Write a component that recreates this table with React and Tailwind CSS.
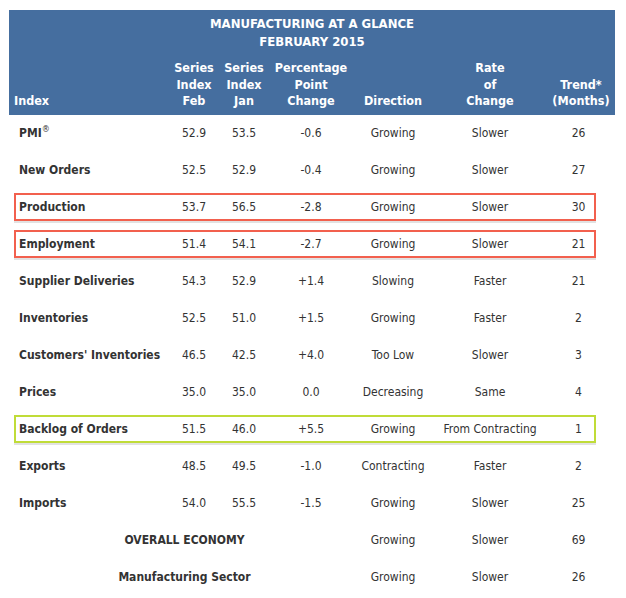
import React from 'react'

const rows = [
    { name: 'PMI', sup: true, feb: '52.9', jan: '53.5', pct: '-0.6', dir: 'Growing', rate: 'Slower', trend: '26' },
    { name: 'New Orders', feb: '52.5', jan: '52.9', pct: '-0.4', dir: 'Growing', rate: 'Slower', trend: '27' },
    { name: 'Production', feb: '53.7', jan: '56.5', pct: '-2.8', dir: 'Growing', rate: 'Slower', trend: '30', box: 'red' },
    { name: 'Employment', feb: '51.4', jan: '54.1', pct: '-2.7', dir: 'Growing', rate: 'Slower', trend: '21', box: 'red' },
    { name: 'Supplier Deliveries', feb: '54.3', jan: '52.9', pct: '+1.4', dir: 'Slowing', rate: 'Faster', trend: '21' },
    { name: 'Inventories', feb: '52.5', jan: '51.0', pct: '+1.5', dir: 'Growing', rate: 'Faster', trend: '2' },
    { name: "Customers' Inventories", feb: '46.5', jan: '42.5', pct: '+4.0', dir: 'Too Low', rate: 'Slower', trend: '3' },
    { name: 'Prices', feb: '35.0', jan: '35.0', pct: '0.0', dir: 'Decreasing', rate: 'Same', trend: '4' },
    { name: 'Backlog of Orders', feb: '51.5', jan: '46.0', pct: '+5.5', dir: 'Growing', rate: 'From Contracting', trend: '1', box: 'green' },
    { name: 'Exports', feb: '48.5', jan: '49.5', pct: '-1.0', dir: 'Contracting', rate: 'Faster', trend: '2' },
    { name: 'Imports', feb: '54.0', jan: '55.5', pct: '-1.5', dir: 'Growing', rate: 'Slower', trend: '25' },
]

const summary = [
    { name: 'OVERALL ECONOMY', dir: 'Growing', rate: 'Slower', trend: '69' },
    { name: 'Manufacturing Sector', dir: 'Growing', rate: 'Slower', trend: '26' },
]

const font = { fontFamily: '"DejaVu Sans Condensed", "DejaVu Sans", sans-serif' }

const Row = ({ row }) => {
    const border = row.box === 'red'
        ? 'border-[#f2604e] shadow-[0_2px_0_#e2e2e2]'
        : row.box === 'green'
            ? 'border-[#c0dc38] shadow-[0_2px_0_#e2e2e2]'
            : 'border-transparent'
    return (
        <div className="h-[37px] flex items-center">
            <div className={`${border} border-2 w-[582px] h-[28px] grid grid-cols-[153px_50px_50px_84px_80px_114px_1fr] items-center text-[12px] text-[#333]`}>
                <div className="pl-[3px] font-bold">
                    {row.name}{row.sup ? <sup className="text-[9px] font-normal -top-[5px]">®</sup> : ''}
                </div>
                <div className="text-center">{row.feb}</div>
                <div className="text-center">{row.jan}</div>
                <div className="text-center">{row.pct}</div>
                <div className="text-center">{row.dir}</div>
                <div className="text-center">{row.rate}</div>
                <div className="pl-[16px] text-center">{row.trend}</div>
            </div>
        </div>
    )
}

const App = () => {
    return (
        <div className="w-[626px] h-[598px] bg-white pt-[10px] pl-[9px]" style={font}>
            <div className="w-[606px] bg-[#456e9f] text-white font-bold pt-[5px] pb-[5px]">
                <div className="text-center text-[13px] leading-[18px]">
                    <p>MANUFACTURING AT A GLANCE</p>
                    <p>FEBRUARY 2015</p>
                </div>
                <div className="mt-[9px] grid grid-cols-[160px_50px_50px_84px_80px_114px_1fr] items-end text-[12.5px] leading-[16.5px] text-center">
                    <div className="text-left pl-[5px]">Index</div>
                    <div>Series<br />Index<br />Feb</div>
                    <div>Series<br />Index<br />Jan</div>
                    <div>Percentage<br />Point<br />Change</div>
                    <div>Direction</div>
                    <div>Rate<br />of<br />Change</div>
                    <div>Trend*<br />(Months)</div>
                </div>
            </div>

            <div className="pl-[5px]">
                {rows.map((row) => (
                    <Row key={row.name} row={row} />
                ))}
                {summary.map((row) => (
                    <div key={row.name} className="h-[37px] flex items-center">
                        <div className="border-2 border-transparent w-[582px] h-[28px] grid grid-cols-[337px_80px_114px_1fr] items-center text-[12px] text-[#333]">
                            <div className="text-center font-bold">{row.name}</div>
                            <div className="text-center">{row.dir}</div>
                            <div className="text-center">{row.rate}</div>
                            <div className="pl-[16px] text-center">{row.trend}</div>
                        </div>
                    </div>
                ))}
            </div>
        </div>
    )
}

export default App
